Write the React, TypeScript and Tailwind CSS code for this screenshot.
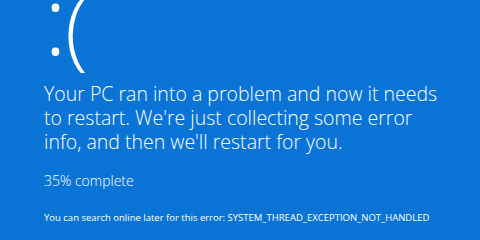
export default function App() {
  return (
    <div className="w-[480px] h-[240px] overflow-hidden bg-[#0a74d6] text-white pl-[44px] flex flex-col font-light" style={{ fontFamily: '"Open Sans", "Noto Sans", sans-serif' }}>
      <div className="h-[80px] flex flex-row items-start shrink-0">
        <span className="text-[96px] leading-[96px] mt-[-30px]">:</span>
        <span className="text-[84px] leading-[84px] mt-[-14px] ml-[-2px]">(</span>
      </div>
      <div className="mt-[2px] flex flex-col text-[19.5px]">
        <div className="leading-[24px] h-[24px]">Your PC ran into a problem and now it needs</div>
        <div className="leading-[24px] h-[24px]">to restart. We're just collecting some error</div>
        <div className="leading-[24px] h-[24px]">info, and then we'll restart for you.</div>
      </div>
      <div className="mt-[18px] text-[14px] leading-[18px] h-[18px]">35% complete</div>
      <div className="mt-[22px] text-[9.5px] leading-[12px] font-normal">You can search online later for this error: SYSTEM_THREAD_EXCEPTION_NOT_HANDLED</div>
    </div>
  );
}
